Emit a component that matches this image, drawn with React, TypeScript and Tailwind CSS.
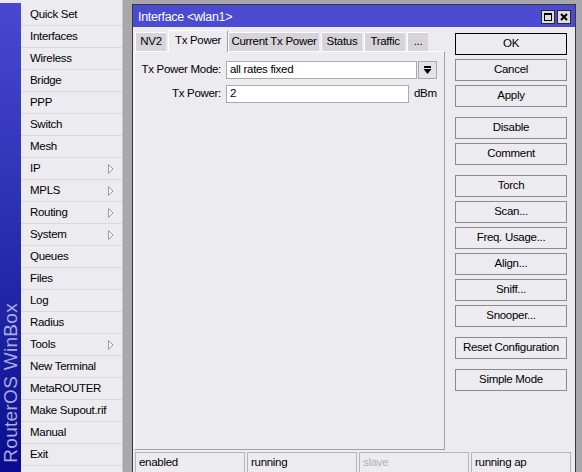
import React from 'react';

/**
 * WinBox-style interface window (wlan1, Tx Power tab)
 */

const FONT = "font-['Liberation_Sans',Arial,sans-serif]";

const menuItems: { label: string; sub?: boolean }[] = [
  { label: 'Quick Set' },
  { label: 'Interfaces' },
  { label: 'Wireless' },
  { label: 'Bridge' },
  { label: 'PPP' },
  { label: 'Switch' },
  { label: 'Mesh' },
  { label: 'IP', sub: true },
  { label: 'MPLS', sub: true },
  { label: 'Routing', sub: true },
  { label: 'System', sub: true },
  { label: 'Queues' },
  { label: 'Files' },
  { label: 'Log' },
  { label: 'Radius' },
  { label: 'Tools', sub: true },
  { label: 'New Terminal' },
  { label: 'MetaROUTER' },
  { label: 'Make Supout.rif' },
  { label: 'Manual' },
  { label: 'Exit' },
];

const tabs = [
  { label: 'NV2', w: 'w-[31px]' },
  { label: 'Tx Power', w: 'w-[60px]', active: true },
  { label: 'Current Tx Power', w: 'w-[91px]' },
  { label: 'Status', w: 'w-[41px]' },
  { label: 'Traffic', w: 'w-[41px]' },
  { label: '...', w: 'w-[21px]' },
];

// groups of buttons, separated by a wider gap
const buttonGroups: string[][] = [
  ['OK', 'Cancel', 'Apply'],
  ['Disable', 'Comment'],
  ['Torch', 'Scan...', 'Freq. Usage...', 'Align...', 'Sniff...', 'Snooper...'],
  ['Reset Configuration'],
  ['Simple Mode'],
];

function SubArrow() {
  return (
    <svg width="6" height="10" viewBox="0 0 6 10" className="mr-[8px]">
      <path d="M0.5 0.5 L5 5 L0.5 9.5 Z" fill="#f4f4f6" stroke="#9a9aa0" strokeWidth="1" />
    </svg>
  );
}

function Sidebar() {
  return (
    <div className="flex h-full w-[123px] shrink-0 bg-[#ecebf0]">
      {/* Brand rail */}
      <div className="mt-[3px] flex w-[21px] flex-col justify-end bg-gradient-to-b from-[#4848d0] to-[#0a0a8e] pb-[9px]">
        <span className="rotate-180 self-center text-[19px] leading-[21px] tracking-[0.3px] text-[#acacdc] [writing-mode:vertical-rl]">
          RouterOS WinBox
        </span>
      </div>

      {/* Menu list */}
      <div className="flex w-[102px] flex-col border-r border-[#c8c8cc] pt-[4px]">
        {menuItems.map((item) => (
          <div
            key={item.label}
            className="flex h-[22px] shrink-0 items-center justify-between border-b border-[#d8d8de] pl-[9px] pt-[1px] text-black"
          >
            <span>{item.label}</span>
            {item.sub && <SubArrow />}
          </div>
        ))}
      </div>
    </div>
  );
}

function TitleBar() {
  return (
    <div className="flex h-[22px] items-center justify-between bg-[#4b4bd2] pl-[5px] pr-[4px]">
      <span className="pt-[3px] text-[12.5px] text-white">Interface &lt;wlan1&gt;</span>
      <div className="flex gap-[2px] pt-[1px]">
        <div className="flex h-[14px] w-[14px] items-center justify-center border border-[#2c2c2c] bg-[#dcdce0]">
          <div className="h-[8px] w-[8px] border border-t-2 border-black" />
        </div>
        <div className="flex h-[14px] w-[14px] items-center justify-center border border-[#2c2c2c] bg-[#dcdce0]">
          <svg width="8" height="8" viewBox="0 0 8 8">
            <path d="M1 1 L7 7 M7 1 L1 7" stroke="#000" strokeWidth="2" />
          </svg>
        </div>
      </div>
    </div>
  );
}

function Tabs() {
  return (
    <div className="flex h-[21px] items-end pl-[1px]">
      {tabs.map((t) =>
        t.active ? (
          <div
            key={t.label}
            className={`${t.w} relative z-10 -mb-[1px] flex h-[22px] items-center justify-center border-l border-t border-r border-l-white border-t-white border-r-[#a0a0a6] bg-[#ecebf0] pb-[1px]`}
          >
            {t.label}
          </div>
        ) : (
          <div
            key={t.label}
            className={`${t.w} mr-[2px] flex h-[19px] items-center justify-center border-l border-t border-l-white border-t-white bg-[#d6d4da]`}
          >
            {t.label}
          </div>
        )
      )}
    </div>
  );
}

function FormPanel() {
  return (
    <div className="flex h-[399px] flex-col gap-[6px] border border-l-white border-t-white border-r-[#a0a0a6] border-b-[#a0a0a6] bg-[#ecebf0] pt-[9px]">
      <div className="flex h-[18px] items-center">
        <span className="w-[86px] text-right">Tx Power Mode:</span>
        <div className="ml-[5px] flex h-[18px] w-[191px] items-center border border-[#a8a8ae] bg-white pl-[3px]">
          all rates fixed
        </div>
        <div className="ml-[1px] flex h-[18px] w-[19px] items-center justify-center border border-[#a8a8ae] bg-[#e4e3e8]">
          <svg width="9" height="9" viewBox="0 0 9 9">
            <rect x="1" y="0" width="7" height="2" fill="#000" />
            <path d="M0.5 3 H8.5 L4.5 8 Z" fill="#000" />
          </svg>
        </div>
      </div>
      <div className="flex h-[18px] items-center">
        <span className="w-[86px] text-right">Tx Power:</span>
        <div className="ml-[5px] flex h-[18px] w-[183px] items-center border border-[#a8a8ae] bg-white pl-[3px]">
          2
        </div>
        <span className="ml-[5px]">dBm</span>
      </div>
    </div>
  );
}

function ActionButtons() {
  return (
    <div className="flex w-[112px] flex-col gap-[10px] pt-[3px]">
      {buttonGroups.map((group, gi) => (
        <div key={gi} className="flex flex-col gap-[4px]">
          {group.map((label) => (
            <div
              key={label}
              className={`flex h-[22px] items-center justify-center border bg-[#ecebf0] ${
                label === 'OK' ? 'border-black' : 'border-[#8a8a90]'
              }`}
            >
              {label}
            </div>
          ))}
        </div>
      ))}
    </div>
  );
}

function StatusBar() {
  const fields = [
    { label: 'enabled', w: 'w-[110px]' },
    { label: 'running', w: 'w-[110px]' },
    { label: 'slave', w: 'w-[110px]', muted: true },
    { label: 'running ap', w: 'w-[100px]' },
  ];
  return (
    <div className="mt-[2px] flex gap-[2px] pl-[2px]">
      {fields.map((f) => (
        <div
          key={f.label}
          className={`${f.w} flex h-[21px] items-center border border-b-0 border-[#b4b4ba] pl-[3px] ${
            f.muted ? 'text-[#b0b0b4]' : 'text-black'
          }`}
        >
          {f.label}
        </div>
      ))}
    </div>
  );
}

export default function App() {
  return (
    <div
      className={`${FONT} flex h-[472px] w-[582px] overflow-hidden bg-[#a8a8ac] text-[11.5px] leading-none tracking-[-0.3px]`}
    >
      <Sidebar />
      <div className="ml-[9px] mt-[4px] flex w-[444px] shrink-0 flex-col self-start border border-[#3a3a3e] bg-[#ecebf0]">
        <TitleBar />
        <div className="flex pl-[1px] pt-[3px]">
          <div className="flex w-[311px] flex-col">
            <Tabs />
            <FormPanel />
          </div>
          <div className="ml-[10px]">
            <ActionButtons />
          </div>
        </div>
        <StatusBar />
      </div>
    </div>
  );
}
